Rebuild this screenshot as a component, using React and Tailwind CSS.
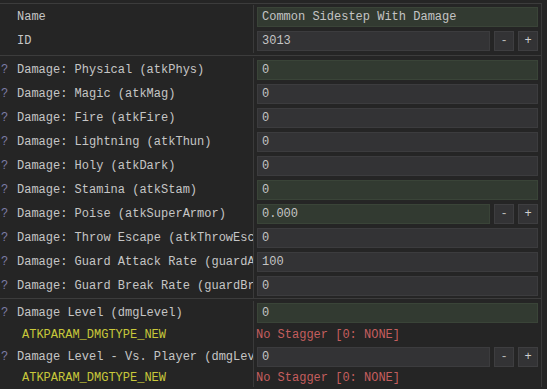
import React from 'react'

const GREEN = 'bg-[#323a31] border-[#3a4438]'
const GRAY = 'bg-[#333335] border-[#3c3c3e]'

function Field({ value, green, stepper }) {
  return (
    <div className="flex h-5 items-stretch gap-1">
      <div
        className={`flex flex-1 items-center border px-[4px] text-[#c4c4c4] ${green ? GREEN : GRAY}`}
      >
        {value}
      </div>
      {stepper && (
        <>
          <div className="flex w-5 items-center justify-center border border-[#3e3e40] bg-[#333335] text-[#b8b8b8]">
            -
          </div>
          <div className="flex w-5 items-center justify-center border border-[#3e3e40] bg-[#333335] text-[#d0d0d0]">
            +
          </div>
        </>
      )}
    </div>
  )
}

function Row({ label, help, value, green, stepper }) {
  return (
    <div className="flex h-6">
      <div className="flex w-[254px] shrink-0 items-center overflow-hidden whitespace-nowrap border-r border-[#3a3a3a]">
        <span className="w-[17px] shrink-0 pl-[1px] text-[#7c7ca6]">{help ? '?' : ''}</span>
        <span className="text-[#c6c6c6]">{label}</span>
      </div>
      <div className="flex flex-1 items-center pl-[3px] pr-[3px]">
        <div className="w-full">
          <Field value={value} green={green} stepper={stepper} />
        </div>
      </div>
    </div>
  )
}

function EnumRow({ name, text, h }) {
  return (
    <div className={`flex ${h}`}>
      <div className="flex w-[254px] shrink-0 items-center border-r border-[#3a3a3a] pl-[22px] text-[#c8c83a]">
        {name}
      </div>
      <div className="flex flex-1 items-center pl-[2px] text-[#c45e5e]">{text}</div>
    </div>
  )
}

const damage = [
  ['Damage: Physical (atkPhys)', '0', true],
  ['Damage: Magic (atkMag)', '0'],
  ['Damage: Fire (atkFire)', '0'],
  ['Damage: Lightning (atkThun)', '0'],
  ['Damage: Holy (atkDark)', '0'],
  ['Damage: Stamina (atkStam)', '0', true],
  ['Damage: Poise (atkSuperArmor)', '0.000', true, true],
  ['Damage: Throw Escape (atkThrowEscape)', '0'],
  ['Damage: Guard Attack Rate (guardAtkRate)', '100'],
  ['Damage: Guard Break Rate (guardBreakRate)', '0'],
]

export default function App() {
  return (
    <div
      className="h-[389px] w-[547px] overflow-hidden bg-[#252525] pt-[3px] text-[12px] leading-none"
      style={{ fontFamily: '"Liberation Mono", "DejaVu Sans Mono", monospace' }}
    >
      <div className="w-[542px] border-r border-[#3a3a3a]">
        <div className="border-t border-[#3c3c3c] pb-[2px] pt-[1px]">
          <Row label="Name" value="Common Sidestep With Damage" green />
          <Row label="ID" value="3013" stepper />
        </div>
        <div className="border-t border-[#3c3c3c] pt-[2px]">
          {damage.map(([label, value, green, stepper]) => (
            <Row key={label} help label={label} value={value} green={green} stepper={stepper} />
          ))}
        </div>
        <div className="border-t border-[#3c3c3c] pt-[2px]">
          <Row help label="Damage Level (dmgLevel)" value="0" green />
          <EnumRow name="ATKPARAM_DMGTYPE_NEW" text="No Stagger [0: NONE]" h="h-5" />
          <Row help label="Damage Level - Vs. Player (dmgLevel_vsPlayer)" value="0" stepper />
          <EnumRow name="ATKPARAM_DMGTYPE_NEW" text="No Stagger [0: NONE]" h="h-[18px]" />
        </div>
      </div>
    </div>
  )
}
